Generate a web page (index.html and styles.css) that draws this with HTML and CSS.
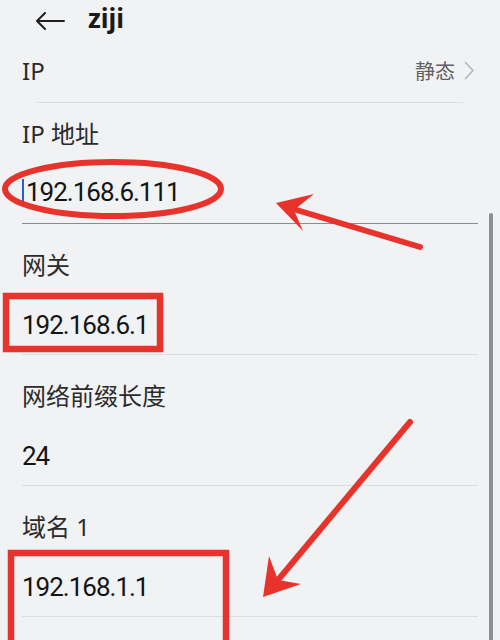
FILE: index.html
```html
<!DOCTYPE html>
<html lang="zh-CN">
<head>
<meta charset="utf-8">
<title>ziji</title>
<link rel="stylesheet" href="styles.css">
</head>
<body>
<div class="page">
  <header class="topbar">
    <svg class="back" width="30" height="18" viewBox="0 0 30 18"><path d="M29 9H2M10 1L2 9L10 17" fill="none" stroke="#1f1f1f" stroke-width="2" stroke-linecap="round" stroke-linejoin="round"/></svg>
    <h1 class="title">ziji</h1>
  </header>
  <div class="row">
    <span class="row-label">IP</span>
    <span class="row-value">静态<svg class="chev" width="11" height="19" viewBox="0 0 11 19"><path d="M1.5 1.5L9 9.5L1.5 17.5" fill="none" stroke="#b4b4b4" stroke-width="1.6" stroke-linecap="round" stroke-linejoin="round"/></svg></span>
  </div>
  <div class="sep"></div>
  <section class="list">
    <div class="field field-edit">
      <div class="f-label">IP 地址</div>
      <div class="f-value"><span class="caret"></span>192.168.6.111</div>
    </div>
    <div class="field">
      <div class="f-label">网关</div>
      <div class="f-value">192.168.6.1</div>
    </div>
    <div class="field">
      <div class="f-label">网络前缀长度</div>
      <div class="f-value">24</div>
    </div>
    <div class="field">
      <div class="f-label">域名 1</div>
      <div class="f-value">192.168.1.1</div>
    </div>
  </section>
  <div class="scrollbar"></div>
  <svg class="marks" width="500" height="640" viewBox="0 0 500 640">
    <g fill="none" stroke="#e8332c" stroke-width="6">
      <ellipse cx="113" cy="189" rx="108" ry="27"/>
    </g>
    <g fill="none" stroke="#e8332c" stroke-width="6.5">
      <rect x="6" y="296" width="154" height="53"/>
      <rect x="11" y="553" width="215" height="110"/>
    </g>
    <g stroke="#e8332c" stroke-width="6" stroke-linecap="round">
      <line x1="420" y1="247" x2="290" y2="208"/>
      <line x1="410" y1="422" x2="278" y2="580"/>
    </g>
    <g fill="#e8332c">
      <polygon points="276,203 314,194 294,210 303,231"/>
      <polygon points="263,597 269,556 278,580 301,584"/>
    </g>
  </svg>
</div>
</body>
</html>
```
FILE: styles.css
```css
html, body {
  margin: 0;
  padding: 0;
  background: #f1f2f4;
}
.page {
  position: relative;
  width: 500px;
  height: 640px;
  overflow: hidden;
  background: #f1f2f4;
  font-family: "Noto Sans", "Noto Sans CJK SC", sans-serif;
  color: #1a1a1a;
}
.topbar {
  height: 42px;
  display: flex;
  align-items: center;
  padding-left: 35px;
}
.back {
  display: block;
  margin-top: -1px;
}
.title {
  margin: -7px 0 0 23px;
  font-size: 26px;
  font-weight: 700;
  line-height: 42px;
  color: #1a1a1a;
}
.row {
  height: 60px;
  display: flex;
  align-items: center;
  justify-content: space-between;
  padding: 0 25px 0 22px;
}
.row-label {
  font-size: 24px;
  color: #2b2b2b;
  margin-top: -3px;
}
.row-value {
  display: flex;
  align-items: center;
  gap: 9px;
  font-size: 20px;
  color: #5f5f5f;
  margin-top: -3px;
}
.chev {
  display: block;
}
.sep {
  height: 1px;
  margin: 0 37px;
  background: #dcdde0;
}
.list {
  padding: 0 22px;
}
.field {
  border-bottom: 1px solid #dcdde0;
}
.f-label {
  height: 78px;
  display: flex;
  align-items: center;
  font-size: 24px;
  color: #2b2b2b;
}
.f-value {
  height: 40px;
  padding-top: 3px;
  margin-bottom: 9px;
  display: flex;
  align-items: center;
  font-family: Roboto, "Noto Sans", sans-serif;
  font-size: 26px;
  letter-spacing: -1px;
  color: #141414;
}
.field-edit {
  border-bottom: 1.5px solid #8c8c8c;
}
.field-edit .f-label {
  height: 58px;
}
.field-edit .f-value {
  height: 62px;
  padding-top: 0;
  margin-bottom: 0;
}
.caret {
  display: inline-block;
  width: 2px;
  height: 27px;
  background: #2363d1;
  margin: 0 2px 0 0;
}
.scrollbar {
  position: absolute;
  left: 489px;
  top: 213px;
  width: 4px;
  height: 440px;
  border-radius: 2px;
  background: #8e8f92;
}
.marks {
  position: absolute;
  left: 0;
  top: 0;
  pointer-events: none;
}
```
